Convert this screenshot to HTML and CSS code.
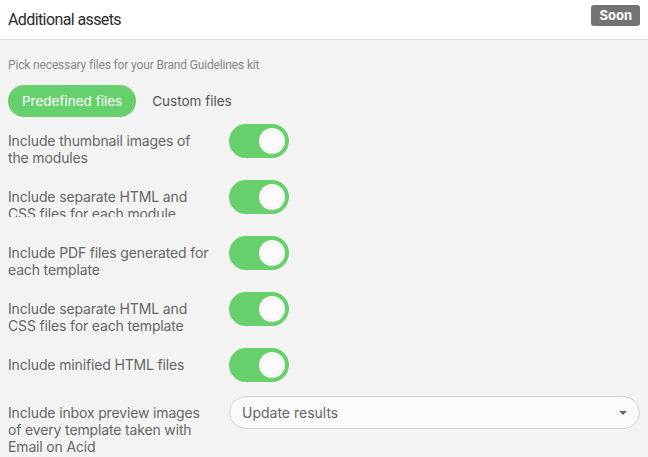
FILE: index.html
```html
<!DOCTYPE html>
<html lang="en">
<head>
    <meta charset="UTF-8">
    <meta name="viewport" content="width=device-width, initial-scale=1.0">
    <title>Additional assets</title>
    <link rel="stylesheet" href="styles.css">
</head>
<body>

    <!-- En-tête -->
    <div class="header">
        <h1>Additional assets</h1>
        <span class="badge">Soon</span>
    </div>

    <div class="content">
        <p class="hint">Pick necessary files for your Brand Guidelines kit</p>

        <div class="tabs">
            <button class="tab active">Predefined files</button>
            <button class="tab">Custom files</button>
        </div>

        <!-- Options -->
        <div class="options">
            <div class="row">
                <label class="label">Include thumbnail images of the modules</label>
                <span class="toggle on"><span class="knob"></span></span>
            </div>
            <div class="row">
                <label class="label"><span class="clip">Include separate HTML and CSS files for each module</span></label>
                <span class="toggle on"><span class="knob"></span></span>
            </div>
            <div class="row">
                <label class="label">Include PDF files generated for each template</label>
                <span class="toggle on"><span class="knob"></span></span>
            </div>
            <div class="row">
                <label class="label">Include separate HTML and CSS files for each template</label>
                <span class="toggle on"><span class="knob"></span></span>
            </div>
            <div class="row">
                <label class="label">Include minified HTML files</label>
                <span class="toggle on"><span class="knob"></span></span>
            </div>
            <div class="row">
                <label class="label">Include inbox preview images of every template taken with Email on Acid</label>
                <div class="select">
                    <span>Update results</span>
                    <span class="caret"></span>
                </div>
            </div>
        </div>
    </div>

</body>
</html>
```

FILE: styles.css
```css
body {
    margin: 0;
    font-family: Inter, "Noto Sans", sans-serif;
    background-color: #f3f3f3;
    color: #666;
    height: 457px;
    overflow: hidden;
}
.header {
    display: flex;
    align-items: center;
    justify-content: space-between;
    height: 39px;
    padding: 0 8px;
    background-color: #fff;
    border-bottom: 1px solid #dcdcdc;
}
.header h1 {
    margin: 0;
    font-family: Roboto, sans-serif;
    font-size: 16px;
    font-weight: 400;
    color: #2b2b2b;
    letter-spacing: -0.6px;
}
.badge {
    background-color: #737373;
    color: #fff;
    font-size: 13px;
    font-weight: 700;
    line-height: 15px;
    padding: 3px 8px;
    border-radius: 3px;
    margin-bottom: 9px;
}
.content { padding: 0 8px; }
.hint {
    margin: 17px 0 0;
    font-family: Roboto, sans-serif;
    font-size: 12px;
    line-height: 17px;
    color: #888;
    letter-spacing: -0.15px;
}
.tabs {
    display: flex;
    gap: 2px;
    margin-top: 11px;
}
.tab {
    font-family: inherit;
    font-size: 13.5px;
    height: 32px;
    padding: 0 14px;
    border: none;
    border-radius: 16px;
    background: none;
    color: #555;
}
.tab.active { background-color: #66d16c; color: #fff; }
.options {
    display: flex;
    flex-direction: column;
    gap: 14px;
    margin-top: 7px;
}
.row { display: flex; align-items: flex-start; gap: 18px; }
.label {
    flex: none;
    width: 203px;
    padding-top: 8px;
    font-size: 14px;
    line-height: 17px;
    letter-spacing: -0.15px;
}
.clip {
    display: block;
    height: 29px;
    overflow: hidden;
    margin-bottom: 5px;
}
.toggle {
    flex: none;
    display: flex;
    align-items: center;
    justify-content: flex-end;
    width: 60px;
    height: 34px;
    padding: 0 4px;
    box-sizing: border-box;
    border-radius: 17px;
    background-color: #66d16c;
}
.knob {
    width: 26px;
    height: 26px;
    border-radius: 50%;
    background-color: #fafafa;
}
.select {
    flex: 1;
    display: flex;
    align-items: center;
    justify-content: space-between;
    height: 33px;
    padding: 0 12px;
    box-sizing: border-box;
    border: 1px solid #d2d2d2;
    border-radius: 17px;
    background-color: #fafafa;
    font-size: 14px;
    color: #666;
}
.caret {
    width: 0;
    height: 0;
    border-left: 4px solid transparent;
    border-right: 4px solid transparent;
    border-top: 4px solid #666;
}
```
